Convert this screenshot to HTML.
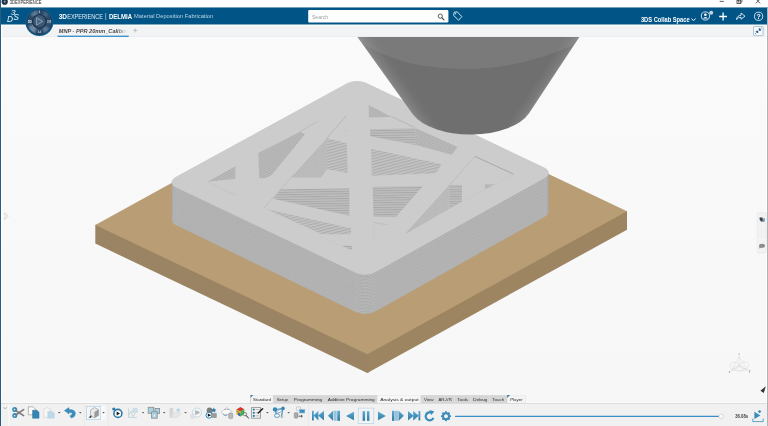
<!DOCTYPE html>
<html lang="en"><head><meta charset="utf-8"><title>3DEXPERIENCE</title>
<style>
html,body{margin:0;padding:0;background:#f8f8f8;}
body{width:768px;height:426px;overflow:hidden;font-family:"Liberation Sans",sans-serif;}
#app{position:relative;width:768px;height:426px;overflow:hidden;background:#f8f8f8;}
#scene,#chrome{position:absolute;left:0;top:0;display:block;}
#chrome{will-change:transform;}

</style></head>
<body>
<div id="app">
<svg id="scene" width="768" height="426" viewBox="0 0 768 426">
<defs>
<linearGradient id="bg" x1="0" y1="0" x2="0" y2="1"><stop offset="0.08" stop-color="#fafafa"/><stop offset="0.95" stop-color="#f7f7f7"/></linearGradient>
<pattern id="d1" width="2" height="2" patternUnits="userSpaceOnUse" patternTransform="rotate(-30)"><rect width="2" height="2" fill="#bdbdbd"/><rect width="2" height="0.8" fill="#a9a9a9"/></pattern>
<pattern id="d2" width="2.8" height="2.8" patternUnits="userSpaceOnUse" patternTransform="rotate(-15)"><rect width="2.8" height="2.8" fill="#c5c5c5"/><rect width="2.8" height="1.3" fill="#adadad"/></pattern>
<pattern id="d3" width="2" height="2" patternUnits="userSpaceOnUse" patternTransform="rotate(-48)"><rect width="2" height="2" fill="#c0c0c0"/><rect width="2" height="0.8" fill="#b2b2b2"/></pattern>
<pattern id="h1" width="2.4" height="2.4" patternUnits="userSpaceOnUse" patternTransform="rotate(-1)"><rect width="2.4" height="2.4" fill="#bfbfbf"/><rect width="2.4" height="1" fill="#a8a8a8"/></pattern>
<pattern id="sL" width="2.4" height="2.4" patternUnits="userSpaceOnUse" patternTransform="rotate(-33)"><rect width="2.4" height="2.4" fill="#bcbcbc"/><rect width="2.4" height="1.1" fill="#aaaaaa"/></pattern>
<pattern id="sR" width="2" height="2" patternUnits="userSpaceOnUse" patternTransform="rotate(-29)"><rect width="2" height="2" fill="#bcbcbc"/><rect width="2" height="0.9" fill="#adadad"/></pattern>
<linearGradient id="nzl" gradientUnits="userSpaceOnUse" x1="357.5" y1="37" x2="370.5" y2="27.7">
<stop offset="0" stop-color="#fff" stop-opacity="0.17"/><stop offset="0.3" stop-color="#fff" stop-opacity="0.09"/><stop offset="0.7" stop-color="#fff" stop-opacity="0.02"/><stop offset="1" stop-color="#fff" stop-opacity="0"/>
</linearGradient>
<linearGradient id="nzr" gradientUnits="userSpaceOnUse" x1="579.3" y1="37" x2="569.3" y2="30.4">
<stop offset="0" stop-color="#fff" stop-opacity="0.15"/><stop offset="0.35" stop-color="#fff" stop-opacity="0.07"/><stop offset="1" stop-color="#fff" stop-opacity="0"/>
</linearGradient>
</defs>
<rect x="0" y="0" width="768" height="426" fill="url(#bg)"/>
<polygon points="95.3,225.0 97.3,224.6 367.3,352.8 368.8,353.6 368.8,372.2 367.3,373.0 95.3,243.6" fill="#9b8463"/>
<polygon points="367.3,352.8 625.0,210.9 627.0,211.3 627.0,229.7 367.3,373.0" fill="#9d8562"/>
<polygon points="95.3,225.0 367.3,354.2 627.0,211.3 355.0,82.1" fill="#b99d74"/>
<polygon points="172.0,182.4 172.1,181.3 172.6,180.2 173.4,179.1 174.4,178.2 175.8,177.3 346.8,83.8 348.4,83.0 350.2,82.4 352.2,81.9 354.3,81.6 356.4,81.5 358.6,81.5 360.7,81.7 362.7,82.1 364.5,82.6 366.2,83.3 544.1,167.8 545.5,168.6 546.7,169.5 547.6,170.5 548.1,171.6 548.3,172.7 548.3,211.7 548.2,212.8 547.8,213.9 547.0,214.9 545.9,215.9 544.6,216.8 375.1,311.4 373.5,312.2 371.7,312.8 369.8,313.3 367.7,313.6 365.5,313.8 363.4,313.7 361.3,313.5 359.3,313.1 357.4,312.6 355.7,311.9 176.3,225.3 174.8,224.5 173.7,223.6 172.8,222.6 172.2,221.5 172.0,220.4" fill="#c1c1c1"/>
<path d="M172.0,183.3 L172.6,185.1 L174.0,186.7 L176.3,188.1 L355.7,273.3 L358.6,274.4 L362.0,275.0 L365.5,275.1 L369.1,274.8 L372.3,274.0 L375.1,272.8 L544.6,178.7 L546.7,177.2 L548.0,175.4 L548.3,173.6 M172.0,184.7 L172.6,186.5 L174.0,188.2 L176.3,189.6 L355.7,274.8 L358.6,275.8 L362.0,276.5 L365.5,276.6 L369.1,276.3 L372.3,275.5 L375.1,274.3 L544.6,180.1 L546.7,178.6 L548.0,176.9 L548.3,175.0 M172.0,186.1 L172.6,187.9 L174.0,189.6 L176.3,191.0 L355.7,276.2 L358.6,277.3 L362.0,277.9 L365.5,278.1 L369.1,277.7 L372.3,276.9 L375.1,275.8 L544.6,181.6 L546.7,180.0 L548.0,178.3 L548.3,176.5 M172.0,187.5 L172.6,189.3 L174.0,191.0 L176.3,192.4 L355.7,277.7 L358.6,278.8 L362.0,279.4 L365.5,279.5 L369.1,279.2 L372.3,278.4 L375.1,277.2 L544.6,183.0 L546.7,181.5 L548.0,179.8 L548.3,177.9 M172.0,188.9 L172.6,190.7 L174.0,192.4 L176.3,193.8 L355.7,279.2 L358.6,280.2 L362.0,280.8 L365.5,281.0 L369.1,280.7 L372.3,279.9 L375.1,278.7 L544.6,184.5 L546.7,182.9 L548.0,181.2 L548.3,179.4 M172.0,190.3 L172.6,192.1 L174.0,193.8 L176.3,195.2 L355.7,280.6 L358.6,281.7 L362.0,282.3 L365.5,282.5 L369.1,282.1 L372.3,281.3 L375.1,280.2 L544.6,185.9 L546.7,184.4 L548.0,182.6 L548.3,180.8 M172.0,191.7 L172.6,193.5 L174.0,195.2 L176.3,196.6 L355.7,282.1 L358.6,283.2 L362.0,283.8 L365.5,283.9 L369.1,283.6 L372.3,282.8 L375.1,281.6 L544.6,187.3 L546.7,185.8 L548.0,184.1 L548.3,182.3 M172.0,193.1 L172.6,194.9 L174.0,196.6 L176.3,198.0 L355.7,283.6 L358.6,284.6 L362.0,285.2 L365.5,285.4 L369.1,285.1 L372.3,284.3 L375.1,283.1 L544.6,188.8 L546.7,187.3 L548.0,185.5 L548.3,183.7 M172.0,194.5 L172.6,196.4 L174.0,198.0 L176.3,199.4 L355.7,285.0 L358.6,286.1 L362.0,286.7 L365.5,286.9 L369.1,286.5 L372.3,285.7 L375.1,284.5 L544.6,190.2 L546.7,188.7 L548.0,187.0 L548.3,185.1 M172.0,196.0 L172.6,197.8 L174.0,199.4 L176.3,200.8 L355.7,286.5 L358.6,287.5 L362.0,288.2 L365.5,288.3 L369.1,288.0 L372.3,287.2 L375.1,286.0 L544.6,191.7 L546.7,190.2 L548.0,188.4 L548.3,186.6 M172.0,197.4 L172.6,199.2 L174.0,200.8 L176.3,202.3 L355.7,288.0 L358.6,289.0 L362.0,289.6 L365.5,289.8 L369.1,289.5 L372.3,288.7 L375.1,287.5 L544.6,193.1 L546.7,191.6 L548.0,189.9 L548.3,188.0 M172.0,198.8 L172.6,200.6 L174.0,202.3 L176.3,203.7 L355.7,289.4 L358.6,290.5 L362.0,291.1 L365.5,291.3 L369.1,290.9 L372.3,290.1 L375.1,288.9 L544.6,194.6 L546.7,193.1 L548.0,191.3 L548.3,189.5 M172.0,200.2 L172.6,202.0 L174.0,203.7 L176.3,205.1 L355.7,290.9 L358.6,291.9 L362.0,292.6 L365.5,292.7 L369.1,292.4 L372.3,291.6 L375.1,290.4 L544.6,196.0 L546.7,194.5 L548.0,192.8 L548.3,190.9 M172.0,201.6 L172.6,203.4 L174.0,205.1 L176.3,206.5 L355.7,292.3 L358.6,293.4 L362.0,294.0 L365.5,294.2 L369.1,293.9 L372.3,293.1 L375.1,291.9 L544.6,197.5 L546.7,195.9 L548.0,194.2 L548.3,192.4 M172.0,203.0 L172.6,204.8 L174.0,206.5 L176.3,207.9 L355.7,293.8 L358.6,294.9 L362.0,295.5 L365.5,295.7 L369.1,295.3 L372.3,294.5 L375.1,293.3 L544.6,198.9 L546.7,197.4 L548.0,195.7 L548.3,193.8 M172.0,204.4 L172.6,206.2 L174.0,207.9 L176.3,209.3 L355.7,295.3 L358.6,296.3 L362.0,297.0 L365.5,297.1 L369.1,296.8 L372.3,296.0 L375.1,294.8 L544.6,200.4 L546.7,198.8 L548.0,197.1 L548.3,195.3 M172.0,205.8 L172.6,207.6 L174.0,209.3 L176.3,210.7 L355.7,296.7 L358.6,297.8 L362.0,298.4 L365.5,298.6 L369.1,298.3 L372.3,297.5 L375.1,296.3 L544.6,201.8 L546.7,200.3 L548.0,198.5 L548.3,196.7 M172.0,207.2 L172.6,209.0 L174.0,210.7 L176.3,212.1 L355.7,298.2 L358.6,299.3 L362.0,299.9 L365.5,300.0 L369.1,299.7 L372.3,298.9 L375.1,297.7 L544.6,203.2 L546.7,201.7 L548.0,200.0 L548.3,198.1 M172.0,208.6 L172.6,210.4 L174.0,212.1 L176.3,213.5 L355.7,299.7 L358.6,300.7 L362.0,301.4 L365.5,301.5 L369.1,301.2 L372.3,300.4 L375.1,299.2 L544.6,204.7 L546.7,203.2 L548.0,201.4 L548.3,199.6 M172.0,210.0 L172.6,211.9 L174.0,213.5 L176.3,214.9 L355.7,301.1 L358.6,302.2 L362.0,302.8 L365.5,303.0 L369.1,302.7 L372.3,301.9 L375.1,300.7 L544.6,206.1 L546.7,204.6 L548.0,202.9 L548.3,201.0 M172.0,211.4 L172.6,213.3 L174.0,214.9 L176.3,216.4 L355.7,302.6 L358.6,303.7 L362.0,304.3 L365.5,304.4 L369.1,304.1 L372.3,303.3 L375.1,302.1 L544.6,207.6 L546.7,206.1 L548.0,204.3 L548.3,202.5 M172.0,212.9 L172.6,214.7 L174.0,216.3 L176.3,217.8 L355.7,304.1 L358.6,305.1 L362.0,305.8 L365.5,305.9 L369.1,305.6 L372.3,304.8 L375.1,303.6 L544.6,209.0 L546.7,207.5 L548.0,205.8 L548.3,203.9 M172.0,214.3 L172.6,216.1 L174.0,217.8 L176.3,219.2 L355.7,305.5 L358.6,306.6 L362.0,307.2 L365.5,307.4 L369.1,307.0 L372.3,306.3 L375.1,305.1 L544.6,210.5 L546.7,209.0 L548.0,207.2 L548.3,205.4 M172.0,215.7 L172.6,217.5 L174.0,219.2 L176.3,220.6 L355.7,307.0 L358.6,308.0 L362.0,308.7 L365.5,308.8 L369.1,308.5 L372.3,307.7 L375.1,306.5 L544.6,211.9 L546.7,210.4 L548.0,208.7 L548.3,206.8 M172.0,217.1 L172.6,218.9 L174.0,220.6 L176.3,222.0 L355.7,308.5 L358.6,309.5 L362.0,310.1 L365.5,310.3 L369.1,310.0 L372.3,309.2 L375.1,308.0 L544.6,213.4 L546.7,211.8 L548.0,210.1 L548.3,208.3 M172.0,218.5 L172.6,220.3 L174.0,222.0 L176.3,223.4 L355.7,309.9 L358.6,311.0 L362.0,311.6 L365.5,311.8 L369.1,311.4 L372.3,310.7 L375.1,309.5 L544.6,214.8 L546.7,213.3 L548.0,211.5 L548.3,209.7 M172.0,219.9 L172.6,221.7 L174.0,223.4 L176.3,224.8 L355.7,311.4 L358.6,312.4 L362.0,313.1 L365.5,313.2 L369.1,312.9 L372.3,312.1 L375.1,310.9 L544.6,216.3 L546.7,214.7 L548.0,213.0 L548.3,211.1" fill="none" stroke="#a2a2a2" stroke-width="0.7"/>
<polygon points="175.8,177.3 174.4,178.2 173.4,179.1 172.6,180.2 172.1,181.3 172.0,182.4 172.2,183.5 172.8,184.5 173.7,185.5 174.8,186.4 176.3,187.2 355.7,272.4 357.4,273.0 359.3,273.6 361.3,273.9 363.4,274.2 365.5,274.2 367.7,274.0 369.8,273.7 371.7,273.3 373.5,272.6 375.1,271.9 544.6,177.7 545.9,176.9 547.0,175.9 547.8,174.8 548.2,173.8 548.3,172.7 548.1,171.6 547.6,170.5 546.7,169.5 545.5,168.6 544.1,167.8 366.2,83.3 364.5,82.6 362.7,82.1 360.7,81.7 358.6,81.5 356.4,81.5 354.3,81.6 352.2,81.9 350.2,82.4 348.4,83.0 346.8,83.8" fill="#cccccc" stroke="#cccccc" stroke-width="0.6"/>
<polygon points="207.5,181.7 235.3,166.3 235.3,178.7" fill="url(#d1)"/>
<polygon points="258.3,153.0 300.0,131.7 305.0,134.2 271.7,175.0 265.0,178.3 259.2,178.3" fill="url(#d1)"/>
<polygon points="326.8,138.3 291.0,177.5 321.0,177.5 326.8,169.2" fill="url(#d3)"/>
<polygon points="326.8,138.3 346.8,143.3 347.7,173.0 326.8,169.2" fill="url(#d2)"/>
<polygon points="368.8,105.0 368.8,117.5 391.3,117.0" fill="url(#d1)"/>
<polygon points="370.2,129.2 415.8,128.3 415.8,145.0 370.2,136.3" fill="url(#h1)"/>
<polygon points="415.8,128.3 457.5,147.0 451.7,154.7 415.8,145.0" fill="url(#d1)"/>
<polygon points="371.0,148.7 441.7,164.2 435.8,173.3 371.8,175.8" fill="url(#d2)"/>
<polygon points="280.8,189.2 349.3,188.3 349.3,215.8 273.3,198.7" fill="url(#h1)"/>
<polygon points="266.7,209.2 351.0,228.3 351.0,234.2 322.0,234.2" fill="url(#d2)"/>
<polygon points="372.7,186.7 422.7,186.2 396.0,216.7 373.5,216.7" fill="url(#h1)"/>
<polygon points="404.5,234.2 449.3,185.0 449.3,208.7 409.5,231.8" fill="url(#d3)"/>
<polygon points="449.3,185.0 461.9,185.0 461.9,201.8 449.3,208.7" fill="url(#h1)"/>
<polygon points="484.8,184.2 495.7,184.2 485.3,189.2" fill="url(#h1)"/>
<polygon points="341.8,245.8 351.8,245.8 351.8,250.3" fill="url(#h1)"/>
<line x1="300" y1="131.7" x2="316.7" y2="121.7" stroke="#b0b0b0" stroke-width="0.6"/>
<line x1="346" y1="115.8" x2="326.8" y2="138.3" stroke="#adadad" stroke-width="0.7"/>
<line x1="391.3" y1="116.5" x2="414.7" y2="127.5" stroke="#adadad" stroke-width="0.7"/>
<line x1="207.5" y1="182" x2="236.7" y2="195.8" stroke="#bcbcbc" stroke-width="0.5"/>
<line x1="293.3" y1="175" x2="263.3" y2="208.7" stroke="#b4b4b4" stroke-width="0.6"/>
<line x1="474.8" y1="156.3" x2="513.7" y2="174.2" stroke="#a4a4a4" stroke-width="0.9"/>
<line x1="474.8" y1="156.3" x2="449" y2="185.8" stroke="#b4b4b4" stroke-width="0.6"/>
<line x1="374.3" y1="222.5" x2="386.8" y2="224.7" stroke="#b4b4b4" stroke-width="0.6"/>
<path d="M319.3,235.8 L341.8,245.8 M373.5,222 V243" stroke="#c4c4c4" stroke-width="0.5" fill="none"/>
<circle cx="345.5" cy="130.2" r="0.5" fill="#b0b0b0"/>
<line x1="513.7" y1="174.2" x2="464" y2="200.8" stroke="#c4c4c4" stroke-width="0.5"/>
<path d="M357.5,37 L579.3,37 L529,113.2 A62,32 0 0 1 413,114.5 Z" fill="#6f6f6f"/>
<path d="M357.5,37 L361.7,43.3 Q395,62 423.3,65.8 Q468,72.5 509.7,65 Q545,58 571.3,45.8 L579.3,37 Z" fill="#fff" fill-opacity="0.083"/>
<path d="M357.5,37 L579.3,37 L529,113.2 A62,32 0 0 1 413,114.5 Z" fill="url(#nzl)"/>
<path d="M357.5,37 L579.3,37 L529,113.2 A62,32 0 0 1 413,114.5 Z" fill="url(#nzr)"/></svg>
<svg id="chrome" width="768" height="426" viewBox="0 0 768 426" font-family="Liberation Sans, sans-serif"><defs>
<filter id="b1" x="-20%" y="-20%" width="140%" height="140%"><feGaussianBlur stdDeviation="0.9"/></filter>
<clipPath id="cclip"><circle cx="39.4" cy="22" r="12.6"/></clipPath>
<linearGradient id="fade" x1="0" x2="1"><stop offset="0" stop-color="#f2f3f5" stop-opacity="0"/><stop offset="0.85" stop-color="#f2f3f5" stop-opacity="1"/><stop offset="1" stop-color="#f2f3f5" stop-opacity="1"/></linearGradient>
<radialGradient id="cring" cx="0.5" cy="0.5" r="0.5"><stop offset="0.5" stop-color="#1c344d"/><stop offset="0.8" stop-color="#34597a"/><stop offset="1" stop-color="#23445f"/></radialGradient>
<linearGradient id="cshine" x1="0.2" y1="0" x2="0.8" y2="1"><stop offset="0" stop-color="#fff" stop-opacity="0.05"/><stop offset="0.3" stop-color="#fff" stop-opacity="0.35"/><stop offset="0.5" stop-color="#fff" stop-opacity="0.02"/><stop offset="0.75" stop-color="#fff" stop-opacity="0.3"/><stop offset="1" stop-color="#fff" stop-opacity="0.05"/></linearGradient>
<radialGradient id="cbtn" cx="0.5" cy="0.4" r="0.6"><stop offset="0" stop-color="#4a6888"/><stop offset="1" stop-color="#36506a"/></radialGradient>
<linearGradient id="pb" x1="0" y1="0" x2="0" y2="1"><stop offset="0" stop-color="#5aaad4"/><stop offset="1" stop-color="#2f7ba6"/></linearGradient>
</defs>
<g id="titlebar">
<rect x="0" y="0" width="768" height="12" fill="#ffffff"/>
<circle cx="4.7" cy="1.7" r="3.1" fill="#1f2f46"/><circle cx="4.7" cy="1.7" r="1.1" fill="#8193ad"/>
<text x="9.7" y="3.9" font-size="5.4" fill="#1e1e1e" font-weight="normal" font-style="normal" text-anchor="start" textLength="31.7" lengthAdjust="spacingAndGlyphs" >3DEXPERIENCE</text>
<rect x="719.6" y="0.9" width="4.2" height="0.8" fill="#333"/>
<rect x="737" y="0.2" width="3.8" height="3.2" fill="none" stroke="#333" stroke-width="0.8"/><rect x="738.4" y="-1.2" width="3.6" height="3.2" fill="none" stroke="#333" stroke-width="0.6"/>
<path d="M755.8,-1 L760.2,3.4 M760.2,-1 L755.8,3.4" stroke="#333" stroke-width="0.8" fill="none"/>
</g>
<g id="header">
<rect x="0" y="20" width="768" height="17" fill="#f2f3f5"/><rect x="0" y="24" width="768" height="1.7" fill="#ffffff"/><rect x="0" y="36" width="768" height="1" fill="#ecedf0"/>
<rect x="0" y="7.45" width="768" height="17.05" fill="#005486"/>
<text x="11.0" y="14.7" font-size="6.4" fill="#fff" font-weight="normal" font-style="italic" text-anchor="start" textLength="4.6" lengthAdjust="spacingAndGlyphs" >3</text>
<text x="7.0" y="21.9" font-size="8.8" fill="#f2f6f9" font-weight="normal" font-style="italic" text-anchor="start" textLength="6.0" lengthAdjust="spacingAndGlyphs" >D</text>
<text x="13.5" y="20.4" font-size="9.0" fill="#f2f6f9" font-weight="normal" font-style="italic" text-anchor="start" textLength="5.4" lengthAdjust="spacingAndGlyphs" >S</text>
<text x="58.75" y="18.75" font-size="6.5" fill="#fff" font-weight="bold" font-style="normal" text-anchor="start" textLength="8.3" lengthAdjust="spacingAndGlyphs" >3D</text>
<text x="67.2" y="18.75" font-size="6.5" fill="#e4eef5" font-weight="normal" font-style="normal" text-anchor="start" textLength="35.7" lengthAdjust="spacingAndGlyphs" >EXPERIENCE</text>
<rect x="105.5" y="13" width="0.6" height="7" fill="#cfe0ec"/>
<text x="108.9" y="18.75" font-size="6.5" fill="#fff" font-weight="bold" font-style="normal" text-anchor="start" textLength="23.1" lengthAdjust="spacingAndGlyphs" >DELMIA</text>
<text x="134.1" y="18.1" font-size="5.6" fill="#bcd4e4" font-weight="normal" font-style="normal" text-anchor="start" textLength="79" lengthAdjust="spacingAndGlyphs" >Material Deposition Fabrication</text>
<rect x="308.2" y="10" width="140.2" height="12.5" rx="1" fill="#fff"/>
<text x="312" y="18.5" font-size="5.6" fill="#9c9c9c" font-weight="normal" font-style="normal" text-anchor="start" textLength="16" lengthAdjust="spacingAndGlyphs" >Search</text>
<circle cx="440.3" cy="16.1" r="2.1" fill="none" stroke="#4a4a4a" stroke-width="0.9"/><path d="M441.9,17.8 L444,19.9" stroke="#4a4a4a" stroke-width="1.2" stroke-linecap="round"/>
<path d="M454.2,12.2 L457.2,11.8 L461.8,16.6 L458.6,20.2 L453.6,15.4 Z" fill="none" stroke="#e8f0f6" stroke-width="0.9" stroke-linejoin="round"/><circle cx="455.6" cy="13.7" r="0.6" fill="#e8f0f6"/>
<text x="640.9" y="21.6" font-size="6.3" fill="#fff" font-weight="bold" font-style="normal" text-anchor="start" textLength="48.8" lengthAdjust="spacingAndGlyphs" >3DS Collab Space</text>
<path d="M691.4,18.7 L693.5,20.5 L695.6,18.7" fill="none" stroke="#fff" stroke-width="1"/>
<circle cx="705.4" cy="16" r="4.1" fill="none" stroke="#fff" stroke-width="0.8"/><circle cx="705.4" cy="14.7" r="1.3" fill="#fff"/><path d="M702.8,18.6 Q705.4,15.2 708,18.6 Z" fill="#fff"/>
<circle cx="711.2" cy="12.8" r="2" fill="#c9d3da"/>
<path d="M719.2,16.5 H727 M723.1,12.6 V20.4" stroke="#fff" stroke-width="1.3" fill="none"/>
<path d="M736.4,19.6 Q737.2,15.4 741,15.3 V13 L745,16.2 L741,19.2 V17.2 Q738.4,17 736.4,19.6 Z" fill="none" stroke="#fff" stroke-width="0.8" stroke-linejoin="round"/>
<circle cx="758.6" cy="16.3" r="4.1" fill="none" stroke="#fff" stroke-width="0.8"/>
<text x="758.6" y="18.9" font-size="7" fill="#fff" font-weight="bold" font-style="normal" text-anchor="middle" >?</text>
</g>
<g id="tabbar">
<text x="58.75" y="32.5" font-size="5.6" fill="#4a4848" font-weight="bold" font-style="italic" text-anchor="start" textLength="68.6" lengthAdjust="spacingAndGlyphs" >MNP - PPR 20mm_Calibra</text>
<rect x="117" y="26" width="11.6" height="9" fill="url(#fade)"/>
<rect x="57.5" y="35.6" width="71.2" height="1.4" fill="#3f93cb"/>
<path d="M133.2,30.4 H137.3 M135.25,28.4 V32.4" stroke="#9a9a9a" stroke-width="0.5" fill="none"/>
<rect x="753.5" y="26.4" width="9.6" height="9.2" rx="0.9" fill="#f5fafd" stroke="#9db5c4" stroke-width="0.8"/>
<path d="M759,30.4 L759.2,28.3 L761.1,30.2 Z M758,31 L757.8,33.1 L755.9,31.2 Z" fill="#1d4e7c" stroke="#1d4e7c" stroke-width="0.5" stroke-linejoin="round"/><path d="M760.4,29 L761.6,27.9 M756.6,32.4 L755.2,33.8" stroke="#1d4e7c" stroke-width="0.7" fill="none"/>
</g>
<g id="compass">
<circle cx="39.4" cy="22.0" r="14" fill="#0d5d8f"/>
<circle cx="39.4" cy="22.0" r="12.6" fill="#26496b"/>
<g filter="url(#b1)" clip-path="url(#cclip)"><path d="M39.4,22.0 L29.75,13.90 A12.6,12.6 0 0 1 37.21,9.59 Z" fill="#cfe0ee" fill-opacity="0.3"/><path d="M39.4,22.0 L44.72,10.58 A12.6,12.6 0 0 1 49.72,14.77 Z" fill="#cfe0ee" fill-opacity="0.18"/><path d="M39.4,22.0 L34.68,33.68 A12.6,12.6 0 0 1 27.72,26.72 Z" fill="#cfe0ee" fill-opacity="0.42"/><path d="M39.4,22.0 L49.97,28.86 A12.6,12.6 0 0 1 44.32,33.60 Z" fill="#cfe0ee" fill-opacity="0.3"/><path d="M39.4,22.0 L51.98,21.34 A12.6,12.6 0 0 1 51.68,24.83 Z" fill="#cfe0ee" fill-opacity="0.1"/><path d="M39.4,22.0 L26.82,22.66 A12.6,12.6 0 0 1 27.12,19.17 Z" fill="#cfe0ee" fill-opacity="0.12"/></g>
<circle cx="39.4" cy="22.0" r="12.6" fill="none" stroke="#16304a" stroke-width="0.5"/>
<circle cx="39.4" cy="21.5" r="7.3" fill="#192d44"/>
<circle cx="39.4" cy="21.4" r="6.3" fill="url(#cbtn)"/>
<path d="M36.6,17.8 L42.6,21.4 L36.6,25 Z" fill="none" stroke="#a9b9cb" stroke-width="0.7" stroke-linejoin="round"/>
<text x="39.4" y="13.2" font-size="3.8" fill="#eef3f8" font-weight="bold" font-style="normal" text-anchor="middle" >i</text>
<text x="29.7" y="22.8" font-size="3.0" fill="#eef3f8" font-weight="bold" font-style="normal" text-anchor="middle" >3D</text>
<text x="49.1" y="22.5" font-size="2.6" fill="#c3d0dc" font-weight="bold" font-style="italic" text-anchor="middle" >V.R</text>
<text x="39.4" y="32.6" font-size="3.2" fill="#eef3f8" font-weight="bold" font-style="normal" text-anchor="middle" >i.i</text>
</g>
<g id="frame">
<rect x="0" y="0" width="1" height="426" fill="#2b5b7e"/><rect x="1" y="25" width="1" height="378" fill="#ffffff"/>
<rect x="766" y="25" width="1" height="401" fill="#ffffff"/><rect x="767" y="7.45" width="1" height="418.55" fill="#b1b4b4"/>
<path d="M4.4,212.8 L8.4,216.2 L4.4,219.6 L4.4,217.6 L6,216.2 L4.4,214.8 Z" fill="#f4f4f4" stroke="#c9c9c9" stroke-width="0.6" stroke-linejoin="round"/>
<rect x="757.2" y="212.7" width="9.2" height="40.2" rx="0.8" fill="#f2f2f2" stroke="#e2e2e2" stroke-width="0.5"/>
<rect x="757.4" y="225.6" width="8.8" height="0.6" fill="#fbfbfb"/><rect x="757.4" y="239" width="8.8" height="0.6" fill="#fbfbfb"/>
<path d="M759.6,217.4 H762.6 L762.8,219.8 L764.4,218 V221.4 H761 L759.6,219.4 Z" fill="#3a3f46"/><path d="M762.6,219.8 L764.4,217.8 V221.4 H762.4 Z" fill="#6fa3c4"/>
<ellipse cx="762" cy="245.8" rx="3" ry="2" fill="#8c8c8c"/><path d="M759.6,246.6 L759.2,248.6 L761.4,247.4 Z" fill="#8c8c8c"/>
<g stroke="#d9d9d9" stroke-width="0.5" fill="none"><path d="M739.2,366 L739.2,355.4 M739.2,366 L730.2,371.2 M739.2,366 L748.6,370.6"/><path d="M739.2,356.6 L731.4,370.4 L747.6,370 Z"/><ellipse cx="734.3" cy="365.6" rx="4.4" ry="3.4"/><ellipse cx="744.4" cy="365.4" rx="4.4" ry="3.4"/><ellipse cx="739.3" cy="368.6" rx="5" ry="2.6"/></g>
<text x="739.2" y="354.8" font-size="2.6" fill="#888" font-weight="normal" font-style="normal" text-anchor="middle" >z</text>
<text x="729.4" y="372.6" font-size="2.6" fill="#666" font-weight="normal" font-style="normal" text-anchor="middle" >x</text>
<text x="749.6" y="371.8" font-size="2.6" fill="#666" font-weight="normal" font-style="normal" text-anchor="middle" >y</text>
<path d="M765.8,386.2 L763.8,393 L760.4,390.8 Z" fill="#333"/>
</g>

<g id="btool">
<rect x="1" y="403" width="766" height="23" fill="#f1f1f1"/>
<rect x="1" y="402" width="249.3" height="1" fill="#fbfbfb"/><rect x="525.9" y="402" width="241" height="1" fill="#fbfbfb"/><rect x="1" y="403" width="249.3" height="1" fill="#dddddd"/><rect x="525.9" y="403" width="241" height="1" fill="#dddddd"/>
<rect x="8.4" y="403.7" width="0.9" height="22.3" fill="#fbfbfb"/>
<path d="M3.4,407.3 L5.1,408.8 L6.8,407.3" fill="none" stroke="#8a8a8a" stroke-width="0.6"/>
<circle cx="14.7" cy="409.6" r="2.5" fill="#3a88b4"/><circle cx="14.8" cy="415.6" r="2.5" fill="#3a88b4"/><circle cx="14.5" cy="409.5" r="0.8" fill="#f4f8fb"/><circle cx="14.6" cy="415.7" r="0.8" fill="#f4f8fb"/>
<path d="M16.8,411.2 L23.6,415.6 M16.8,414.2 L23.6,409.6" stroke="#7d7d7d" stroke-width="1.7" stroke-linecap="round" fill="none"/>
<path d="M28.4,406.8 H33 L35.4,409.2 V414.8 H28.4 Z" fill="#fdfdfd" stroke="#8a8a8a" stroke-width="0.6"/>
<path d="M32.6,410.2 H37 L39,412.2 V418.2 H32.6 Z" fill="#3586b4" stroke="#276f99" stroke-width="0.5"/>
<path d="M43.8,409 Q47,406.4 50.4,409 V417.4 H43.8 Z" fill="#f7f7f7" stroke="#cfcfcf" stroke-width="0.6"/>
<path d="M47.6,411.2 H52.4 L54.4,413.2 V418.3 H47.6 Z" fill="#bcd7e6" stroke="#c5d9e4" stroke-width="0.4"/>
<path d="M57.9,412 h2.6 l-1.3,1.4 Z" fill="#5a5a5a"/>
<path d="M64.4,410.6 L69,407.6 V409.6 Q75.4,409.4 75.4,413.8 Q75.2,417 71.4,418.1 L69.8,415.9 Q72.4,415.2 72.2,413.4 Q71.8,412.4 69,412.6 V414 Z" fill="#3b8fbf" stroke="#2e7aa6" stroke-width="0.4" stroke-linejoin="round"/>
<path d="M79,412 h2.6 l-1.3,1.4 Z" fill="#5a5a5a"/>
<rect x="84.4" y="404" width="0.5" height="22" fill="#e4e4e4"/>
<rect x="86.4" y="406.4" width="14.4" height="13.2" fill="#f3f7fa" stroke="#a7cbe2" stroke-width="0.6"/><rect x="101.1" y="406.2" width="4.4" height="13.6" fill="#fafafa"/>
<path d="M90.4,410 L94.4,407.6 L98.6,409.6 V415.4 L94.4,417.8 L90.4,415.6 Z" fill="#e9e9e9" stroke="#8e8e8e" stroke-width="0.6"/><path d="M94.4,412 L98.6,409.6 V415.4 L94.4,417.8 Z" fill="#9a9a9a"/><path d="M88.4,417.6 L91.6,415.2 L91.2,417.8 Z" fill="#222"/>
<path d="M102.2,412 h2.6 l-1.3,1.4 Z" fill="#5a5a5a"/>
<rect x="108.0" y="404" width="0.6" height="22" fill="#d4d4d4"/><rect x="108.6" y="404" width="0.5" height="22" fill="#fbfbfb"/>
<circle cx="117.9" cy="413.4" r="4" fill="#fff" stroke="#2e7ba6" stroke-width="1.6"/><path d="M116.6,411.4 L120,413.4 L116.6,415.4 Z" fill="#1a1a1a"/><circle cx="113.8" cy="409" r="1.6" fill="#2e7ba6"/>
<path d="M128.6,408.4 V417.4 H137 M129,415 L131,411 L133,416.4 L135,414" fill="none" stroke="#b9cdd6" stroke-width="0.8"/><circle cx="135" cy="410.6" r="2.6" fill="#cfe2ea" stroke="#b7cfda" stroke-width="0.5"/>
<path d="M141.8,412 h2.6 l-1.3,1.4 Z" fill="#5a5a5a"/>
<rect x="148.2" y="407.3" width="5.6" height="6" fill="#a9d3e6" stroke="#8a8a8a" stroke-width="0.8"/><rect x="155" y="408.4" width="4.6" height="5" fill="#a9d3e6" stroke="#8a8a8a" stroke-width="0.8"/><rect x="151.6" y="411.8" width="5.6" height="6.4" fill="#a9d3e6" stroke="#8a8a8a" stroke-width="0.8"/><path d="M153,416.8 L154.4,413.6 L155.8,416.8 Z" fill="#fff" stroke="#7fa9bd" stroke-width="0.3"/>
<path d="M162.9,412 h2.6 l-1.3,1.4 Z" fill="#5a5a5a"/>
<rect x="169.6" y="408" width="3.6" height="9.6" fill="#d6d6d6"/><path d="M172,414 Q176,410.6 180.4,412.6 Q181,416.6 176,417.6 H172 Z" fill="#e6e6e6" stroke="#d0d8dc" stroke-width="0.4"/><path d="M178.2,407.6 l0.7,1.5 1.6,0.2 -1.2,1.1 0.3,1.6 -1.4,-0.8 -1.4,0.8 0.3,-1.6 -1.2,-1.1 1.6,-0.2 Z" fill="#b5d3e2"/>
<path d="M184.2,412 h2.6 l-1.3,1.4 Z" fill="#5a5a5a"/>
<circle cx="197" cy="412.6" r="4.6" fill="#f1f5f7" stroke="#c2dbe7" stroke-width="1"/><path d="M195.2,410 L200.4,412.6 L195.2,415.2 Z" fill="#b4b4b4"/><rect x="190.8" y="414.8" width="3.2" height="3.6" fill="#e3e3e3" stroke="#d2d2d2" stroke-width="0.4"/>
<circle cx="209.6" cy="410.4" r="2.9" fill="#7d7d7d"/><circle cx="209" cy="415.2" r="3" fill="#fff" stroke="#3586b4" stroke-width="1"/><path d="M207.8,413.6 L211.2,415.2 L207.8,416.8 Z" fill="#111"/><rect x="212.4" y="413.4" width="4" height="4.4" fill="#9c9c9c" stroke="#7e7e7e" stroke-width="0.4"/><path d="M213.8,407.6 l0.8,1.6 1.8,0.3 -1.3,1.2 0.3,1.8 -1.6,-0.9 -1.6,0.9 0.3,-1.8 -1.3,-1.2 1.8,-0.3 Z" fill="#2e7ba6"/>
<path d="M221,412.4 L226.6,407.6 L232,411.4 L229,414.4 H223.4 Z" fill="#fbfbfb" stroke="#b5b5b5" stroke-width="0.6"/><path d="M224,409.8 Q226.6,408.4 229.4,409.8" stroke="#9a9a9a" stroke-width="0.7" fill="none"/><path d="M223,413.8 Q225,416.8 227.2,415.2" stroke="#4c93bb" stroke-width="0.8" fill="none"/><rect x="228.6" y="413" width="4.2" height="5.6" rx="1" fill="#b9b9b9" stroke="#8e8e8e" stroke-width="0.5"/>
<path d="M236.4,409.4 L240.4,407 L244.4,409.2 L240.4,411.4 Z" fill="#d8342c"/><path d="M236.4,409.4 L240.4,411.4 V416.4 L236.4,414.2 Z" fill="#e0a22c"/><path d="M240.4,411.4 L244.4,409.2 V414.2 L240.4,416.4 Z" fill="#3cb54a"/><path d="M238.2,412.6 L240.4,413.8 V416.4 L238.2,415.2 Z" fill="#2f5fc0"/><path d="M236.4,411.6 L238.2,412.6 V410.4 Z" fill="#3cb54a"/>
<circle cx="245" cy="414.2" r="1.7" fill="#e8eef2" stroke="#4a4a4a" stroke-width="0.6"/><path d="M246.2,415.6 L248.6,418.2" stroke="#222" stroke-width="1" stroke-linecap="round"/>
<rect x="251.6" y="407.6" width="9" height="10.6" fill="#f2f2f2" stroke="#8e8e8e" stroke-width="0.8"/>
<circle cx="253.8" cy="409.6" r="1.1" fill="#2e7ba6"/><rect x="255.6" y="409.3" width="4" height="0.6" fill="#9a9a9a"/>
<circle cx="253.8" cy="412.8" r="1.1" fill="#2e7ba6"/><rect x="255.6" y="412.5" width="4" height="0.6" fill="#9a9a9a"/>
<circle cx="253.8" cy="415.9" r="1.1" fill="#2e7ba6"/><rect x="255.6" y="415.59999999999997" width="4" height="0.6" fill="#9a9a9a"/>
<path d="M258.2,413 L262.6,408.8" stroke="#1c1c1c" stroke-width="1.5" stroke-linecap="round"/>
<path d="M266.1,412 h2.6 l-1.3,1.4 Z" fill="#5a5a5a"/>
<path d="M275,409.6 L283,408.4 M275,409.6 L276.6,415.6 M283,408.4 L281.6,416" stroke="#3586b4" stroke-width="0.9" fill="none"/><circle cx="275" cy="409.4" r="2.2" fill="#3586b4"/><circle cx="283" cy="408.4" r="1.8" fill="#3586b4"/><ellipse cx="279.4" cy="411.2" rx="3.2" ry="1.3" transform="rotate(-28 279.4 411.2)" fill="#fff" stroke="#3586b4" stroke-width="0.6"/><ellipse cx="277" cy="415.6" rx="2.6" ry="1.8" fill="#fff" stroke="#3586b4" stroke-width="0.8"/><path d="M281.8,413 V417.6 M280.6,416.4 L281.8,417.8 L283,416.4" stroke="#8e8e8e" stroke-width="0.7" fill="none"/>
<path d="M287.3,412 h2.6 l-1.3,1.4 Z" fill="#5a5a5a"/>
<rect x="296.4" y="406.8" width="4.2" height="4" rx="1.2" fill="#f0f0f0" stroke="#b5b5b5" stroke-width="0.6"/><rect x="299.6" y="409.6" width="5.2" height="3.4" fill="#3f8fbd" stroke="#7fb4d2" stroke-width="0.5"/><rect x="294.2" y="412.6" width="3.8" height="5.6" rx="1.2" fill="#a9a9a9" stroke="#8a8a8a" stroke-width="0.5"/><path d="M298.6,416.2 H302 M301,415 L302.4,416.2 L301,417.4" stroke="#222" stroke-width="0.7" fill="none"/>
<rect x="308.0" y="404" width="0.6" height="22" fill="#d4d4d4"/><rect x="308.6" y="404" width="0.5" height="22" fill="#fbfbfb"/>
<rect x="312" y="410.8" width="1.8" height="9.6" fill="url(#pb)"/><path d="M318.4,410.8 V420.4 L313.6,415.6 Z" fill="url(#pb)"/><path d="M324,410.8 V420.4 L318.2,415.6 Z" fill="url(#pb)"/>
<path d="M333,410.8 V420.8 L328,415.8 Z" fill="url(#pb)"/><rect x="333.5" y="410.8" width="3.2" height="10" fill="#9cc3d8"/><rect x="337.3" y="410.8" width="2.7" height="10" fill="url(#pb)"/>
<path d="M354,411.8 V420.3 L346,416 Z" fill="url(#pb)"/>
<rect x="358.3" y="408.2" width="15.4" height="15.4" fill="#f1f1f1" stroke="#a6cde5" stroke-width="0.7"/><rect x="359.1" y="409" width="13.8" height="13.8" fill="none" stroke="#fbfbfb" stroke-width="0.6"/>
<rect x="362.6" y="411.2" width="2.5" height="9.6" fill="url(#pb)"/><rect x="367" y="411.2" width="2.4" height="9.6" fill="url(#pb)"/>
<path d="M378,411.6 V420.3 L385.8,416 Z" fill="url(#pb)"/>
<rect x="392" y="410.8" width="2.4" height="10" fill="url(#pb)"/><rect x="394.8" y="410.8" width="3.6" height="10" fill="#9cc3d8"/><path d="M398.7,410.8 V420.8 L403.9,415.8 Z" fill="url(#pb)"/>
<path d="M408,411 V420.4 L413.6,415.7 Z" fill="url(#pb)"/><path d="M413.2,411 V420.4 L418.8,415.7 Z" fill="url(#pb)"/><rect x="418.5" y="411" width="1.8" height="9.4" fill="url(#pb)"/>
<path d="M431.2,412.6 A4,4 0 1 0 433.4,417.8" fill="none" stroke="#3a8dba" stroke-width="2.2"/><path d="M429.4,410 L434.4,411.6 L431.2,415 Z" fill="#3a8dba"/>
<g transform="translate(446,416.2)"><circle r="3" fill="none" stroke="#3a8dba" stroke-width="2"/><rect x="-0.9" y="-5" width="1.8" height="2.2" fill="#3a8dba" transform="rotate(0)"/><rect x="-0.9" y="-5" width="1.8" height="2.2" fill="#3a8dba" transform="rotate(45)"/><rect x="-0.9" y="-5" width="1.8" height="2.2" fill="#3a8dba" transform="rotate(90)"/><rect x="-0.9" y="-5" width="1.8" height="2.2" fill="#3a8dba" transform="rotate(135)"/><rect x="-0.9" y="-5" width="1.8" height="2.2" fill="#3a8dba" transform="rotate(180)"/><rect x="-0.9" y="-5" width="1.8" height="2.2" fill="#3a8dba" transform="rotate(225)"/><rect x="-0.9" y="-5" width="1.8" height="2.2" fill="#3a8dba" transform="rotate(270)"/><rect x="-0.9" y="-5" width="1.8" height="2.2" fill="#3a8dba" transform="rotate(315)"/></g>
<rect x="455" y="415.7" width="264.4" height="1.3" rx="0.6" fill="#3b8fc8"/>
<circle cx="721.2" cy="416.3" r="2.3" fill="#fdfdfd" stroke="#bdbdbd" stroke-width="0.6"/>
<text x="735.3" y="418.2" font-size="4.6" fill="#3c3c3c" font-weight="bold" font-style="normal" text-anchor="start" textLength="12.8" lengthAdjust="spacingAndGlyphs" >36.08s</text>
<path d="M754.4,411.8 L760.4,415.4 L754.4,419 Z" fill="#3a8dba"/><path d="M759.6,410 l1.8,1.6 -1.8,1.6 -1.8,-1.6 Z" fill="#3a8dba"/><path d="M752.8,418.6 V421.6 H763.2 V418.6" fill="none" stroke="#3a8dba" stroke-width="0.8"/>
</g>
<g id="btabs">
<rect x="250.3" y="395" width="275.6" height="9" fill="#e2e2e2"/><rect x="250.3" y="403" width="275.6" height="1" fill="#dcdcdc"/>
<rect x="250.75" y="395.3" width="22.0" height="7.7" fill="#f4f4f4"/>
<path d="M250.3,395 h3 l-3,3 Z" fill="#2c7cb8"/>
<text x="253" y="400.9" font-size="4.3" fill="#2a2a2a" font-weight="normal" font-style="normal" text-anchor="start" textLength="18" lengthAdjust="spacingAndGlyphs" >Standard</text>
<rect x="273.25" y="395.3" width="18.2" height="7.7" fill="#d6d6d6"/>
<text x="276.7" y="400.9" font-size="4.3" fill="#2a2a2a" font-weight="normal" font-style="normal" text-anchor="start" textLength="11.3" lengthAdjust="spacingAndGlyphs" >Setup</text>
<rect x="291.95" y="395.3" width="32.5" height="7.7" fill="#d6d6d6"/>
<text x="293.8" y="400.9" font-size="4.3" fill="#2a2a2a" font-weight="normal" font-style="normal" text-anchor="start" textLength="28.4" lengthAdjust="spacingAndGlyphs" >Programming</text>
<rect x="324.95" y="395.3" width="52.1" height="7.7" fill="#d6d6d6"/>
<text x="327.7" y="400.9" font-size="4.3" fill="#2a2a2a" font-weight="normal" font-style="normal" text-anchor="start" textLength="47.1" lengthAdjust="spacingAndGlyphs" >Additive Programming</text>
<rect x="377.55" y="395.3" width="42.9" height="7.7" fill="#f6f6f6"/>
<text x="380.2" y="400.9" font-size="4.3" fill="#2a2a2a" font-weight="normal" font-style="normal" text-anchor="start" textLength="38.5" lengthAdjust="spacingAndGlyphs" >Analysis &amp; output</text>
<rect x="420.95" y="395.3" width="14.8" height="7.7" fill="#d6d6d6"/>
<text x="424" y="400.9" font-size="4.3" fill="#2a2a2a" font-weight="normal" font-style="normal" text-anchor="start" textLength="9.5" lengthAdjust="spacingAndGlyphs" >View</text>
<rect x="436.25" y="395.3" width="18.2" height="7.7" fill="#d6d6d6"/>
<text x="438.5" y="400.9" font-size="4.3" fill="#2a2a2a" font-weight="normal" font-style="normal" text-anchor="start" textLength="13.3" lengthAdjust="spacingAndGlyphs" >AR-VR</text>
<rect x="454.95" y="395.3" width="15.8" height="7.7" fill="#d6d6d6"/>
<text x="457.3" y="400.9" font-size="4.3" fill="#2a2a2a" font-weight="normal" font-style="normal" text-anchor="start" textLength="10.7" lengthAdjust="spacingAndGlyphs" >Tools</text>
<rect x="471.25" y="395.3" width="17.8" height="7.7" fill="#d6d6d6"/>
<text x="473" y="400.9" font-size="4.3" fill="#2a2a2a" font-weight="normal" font-style="normal" text-anchor="start" textLength="14.3" lengthAdjust="spacingAndGlyphs" >Debug</text>
<rect x="489.55" y="395.3" width="17.5" height="7.7" fill="#d6d6d6"/>
<text x="492.3" y="400.9" font-size="4.3" fill="#2a2a2a" font-weight="normal" font-style="normal" text-anchor="start" textLength="12.0" lengthAdjust="spacingAndGlyphs" >Touch</text>
<rect x="507.55" y="395.3" width="17.9" height="7.7" fill="#f4f4f4"/>
<path d="M507.1,395 h3 l-3,3 Z" fill="#2c7cb8"/>
<text x="510.2" y="400.9" font-size="4.3" fill="#2a2a2a" font-weight="normal" font-style="normal" text-anchor="start" textLength="12.5" lengthAdjust="spacingAndGlyphs" >Player</text>
<rect x="250" y="395" width="0.6" height="8.3" fill="#c4c4c4"/>
</g>
</svg>
</div>
</body></html>
